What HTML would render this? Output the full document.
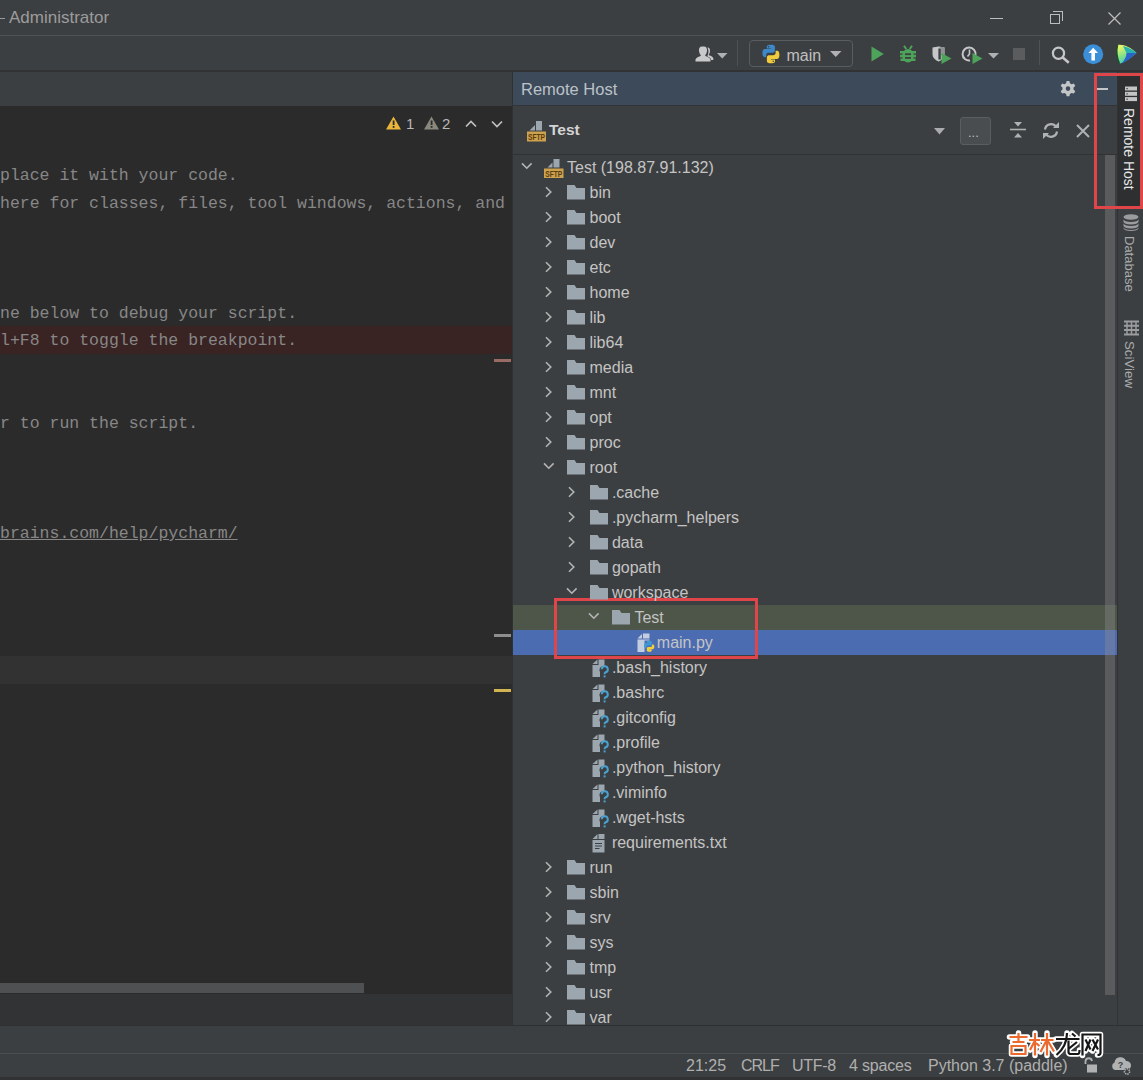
<!DOCTYPE html>
<html><head><meta charset="utf-8">
<style>
*{margin:0;padding:0;box-sizing:border-box}
html,body{width:1143px;height:1080px;overflow:hidden;background:#3c3f41;font-family:"Liberation Sans",sans-serif}
.a{position:absolute}
.code{position:absolute;left:0;font-family:"Liberation Mono",monospace;font-size:16.5px;color:#878787;white-space:pre;line-height:20px}
.tr{position:absolute;height:25px;left:513px;width:590px}
.tt{position:absolute;font-size:16px;color:#bbbbbb;white-space:pre;line-height:20px;top:2px}
svg{position:absolute;overflow:visible}
</style></head><body>
<!-- title bar -->
<div class="a" style="left:0;top:0;width:1143px;height:35px;background:#3c3f41"></div>
<div class="a" style="left:0;top:35px;width:1143px;height:1px;background:#505354"></div>
<div class="a" style="left:-2px;top:18px;width:7px;height:1px;background:#9a9a9a"></div>
<div class="a" style="left:9px;top:8px;font-size:17px;color:#9c9c9c;line-height:20px;white-space:pre">Administrator</div>
<!-- window controls -->
<div class="a" style="left:990px;top:18px;width:13px;height:1px;background:#bdbdbd"></div>
<div class="a" style="left:1050px;top:14px;width:10px;height:10px;border:1px solid #bdbdbd"></div>
<div class="a" style="left:1053px;top:11px;width:10px;height:10px;border-top:1px solid #bdbdbd;border-right:1px solid #bdbdbd"></div>
<svg style="left:1108px;top:12px" width="13" height="13"><path d="M0.5 0.5L12.5 12.5M12.5 0.5L0.5 12.5" stroke="#bdbdbd" stroke-width="1.2"/></svg>

<!-- toolbar -->
<div class="a" style="left:0;top:36px;width:1143px;height:35px;background:#3c3f41"></div>
<div class="a" style="left:0;top:70px;width:1143px;height:2px;background:#303234"></div>


<!-- toolbar icons -->
<svg style="left:695px;top:46px" width="19" height="16" viewBox="0 0 19 16"><path d="M9 0.5C11.3 0.5 12.3 2.5 12 5C11.7 7.2 10.8 8.5 10.2 9.2L10.4 10C13.2 10.8 15 12 15.5 13.5V15.5H0.5V13.5C1 12 2.8 10.8 5.6 10L5.8 9.2C5.2 8.5 4.3 7.2 4 5C3.7 2.5 4.7 0.5 7 0.5Z" fill="#c7c9cb"/><path d="M12.5 1.5C14.5 1.5 15.2 3.2 15 5.2C14.8 7 14.2 8 13.7 8.6L13.9 9.3C16.3 10 17.8 11 18.3 12.3V14H16.2C15.8 12.4 14.5 11.2 12.2 10.3C13.2 8.8 13.6 6.5 13.4 4.5C13.3 3.2 12.9 2.2 12.3 1.5Z" fill="#c7c9cb"/></svg>
<svg style="left:717px;top:53px" width="11" height="6"><path d="M0 0H10.5L5.25 5.5Z" fill="#afb1b3"/></svg>
<div class="a" style="left:737px;top:40px;width:1px;height:26px;background:#4f5254"></div>
<div class="a" style="left:749px;top:40px;width:104px;height:27px;border:1.5px solid #5a5d5f;border-radius:4px"></div>
<svg style="left:761px;top:44px" width="20" height="20" viewBox="0 0 20 20"><path d="M9.8 0.8C5.6 0.8 5.8 2.6 5.8 2.6V4.5H9.9V5.1H4.1C4.1 5.1 1.4 4.8 1.4 9.1C1.4 13.4 3.8 13.2 3.8 13.2H5.2V11.2C5.2 11.2 5.1 8.8 7.6 8.8H11.6C11.6 8.8 13.9 8.8 13.9 6.5V2.8C13.9 2.8 14.3 0.8 9.8 0.8ZM7.6 2A0.75 0.75 0 1 1 7.6 3.5A0.75 0.75 0 1 1 7.6 2Z" fill="#3d88c8"/><path d="M10 19.2C14.2 19.2 14 17.4 14 17.4V15.5H9.9V14.9H15.7C15.7 14.9 18.4 15.2 18.4 10.9C18.4 6.6 16 6.8 16 6.8H14.6V8.8C14.6 8.8 14.7 11.2 12.2 11.2H8.2C8.2 11.2 5.9 11.2 5.9 13.5V17.2C5.9 17.2 5.5 19.2 10 19.2ZM12.2 18A0.75 0.75 0 1 1 12.2 16.5A0.75 0.75 0 1 1 12.2 18Z" fill="#f0cc3c"/></svg>
<div class="a" style="left:786.5px;top:45.5px;font-size:16px;color:#c0c0c0;line-height:20px;white-space:pre;transform:scaleY(1.08);transform-origin:0 15px">main</div>
<svg style="left:830px;top:51px" width="12" height="7"><path d="M0 0H11.5L5.75 6Z" fill="#afb1b3"/></svg>
<svg style="left:871px;top:46px" width="13" height="16"><path d="M0.5 0.5L12.8 8L0.5 15.5Z" fill="#4ea35a"/></svg>
<svg style="left:899px;top:45px" width="18" height="18" viewBox="0 0 18 18"><path d="M5 0.8L7.2 4M13 0.8L10.8 4" stroke="#4ea35a" stroke-width="2"/><path d="M1 7.2H17M1 11H17M1.5 14.8H16.5" stroke="#4ea35a" stroke-width="2.4"/><ellipse cx="9" cy="10.8" rx="5.8" ry="6.8" fill="#4ea35a"/><rect x="6" y="8.3" width="6" height="1.8" fill="#3c3f41"/><rect x="6" y="12" width="6" height="1.8" fill="#3c3f41"/></svg>
<svg style="left:932px;top:46px" width="20" height="19" viewBox="0 0 20 19"><path d="M0.5 1.5L6.5 0.5L12.5 1.5V8.5C12.5 11.5 10 14 6.5 15.5C3 14 0.5 11.5 0.5 8.5Z" fill="#c4c6c8"/><path d="M6.5 0.5L12.5 1.5V8.5L9 9.5V2.5Z" fill="#8f9193"/><rect x="6.4" y="2.5" width="2.4" height="11" fill="#3c3f41"/><path d="M9.5 7L19.5 12.5L9.5 18Z" fill="#4ea35a"/></svg>
<svg style="left:962px;top:46px" width="21" height="19" viewBox="0 0 21 19"><path d="M13.5 9A6.5 6.5 0 1 0 8 14.5" stroke="#c4c6c8" stroke-width="2" fill="none"/><path d="M7.5 3.5V8L5.5 10.5" stroke="#c4c6c8" stroke-width="1.6" fill="none"/><path d="M10.5 7L20.5 12.5L10.5 18Z" fill="#4ea35a"/></svg>
<svg style="left:988px;top:53px" width="12" height="6"><path d="M0 0H11L5.5 5.5Z" fill="#afb1b3"/></svg>
<div class="a" style="left:1013px;top:48px;width:12px;height:12px;background:#5b5c5d"></div>
<div class="a" style="left:1039px;top:40px;width:1px;height:25px;background:#4f5254"></div>
<svg style="left:1051px;top:46px" width="20" height="18"><circle cx="7.5" cy="7.3" r="5.6" stroke="#c4c6c8" stroke-width="2.2" fill="none"/><path d="M11.5 11.3L17.8 16.8" stroke="#c4c6c8" stroke-width="2.6"/></svg>
<svg style="left:1083px;top:44px" width="21" height="21"><circle cx="10.2" cy="10.2" r="10" fill="#3a8fd6"/><path d="M10.2 3.8L15 9H12V16.5H8.4V9H5.4Z" fill="#ffffff"/></svg>
<svg style="left:1115px;top:41px" width="23" height="24" viewBox="0 0 23 24"><defs><linearGradient id="g1" x1="0.2" y1="0.1" x2="0.6" y2="1"><stop offset="0" stop-color="#e6f46a"/><stop offset="0.5" stop-color="#7fe08a"/><stop offset="1" stop-color="#36c8c8"/></linearGradient></defs><path d="M2.5 4C8.5 3 15.5 6 21.5 12C15.5 17.5 10 21 4.5 22.8C1.5 16 1.2 10 2.5 4Z" fill="url(#g1)"/><path d="M8 5C13.5 6.5 18 9 21.5 12H11.5Z" fill="#27b0b0"/><path d="M11.5 12H21.5C16 17 11.5 20.5 6.5 22.5C9.5 19 11.5 15.5 11.5 12Z" fill="#2b64c8"/><path d="M2.5 4C1 10 1.5 16 4.5 22.8" stroke="#1f4f2a" stroke-width="1.6" fill="none"/></svg>

<!-- editor tabs strip -->
<div class="a" style="left:0;top:72px;width:512px;height:34px;background:#3c3f41"></div>
<!-- editor -->
<div class="a" style="left:0;top:106px;width:512px;height:888px;background:#2b2b2b"></div>
<div class="a" style="left:0;top:326px;width:512px;height:28px;background:#3a2323"></div>
<div class="a" style="left:0;top:656px;width:512px;height:28px;background:#323232"></div>
<div class="a" style="left:494px;top:359px;width:17px;height:3px;background:#9a6a64"></div>
<div class="a" style="left:494px;top:634px;width:17px;height:3px;background:#8e8e8e"></div>
<div class="a" style="left:494px;top:689px;width:17px;height:3px;background:#d2b450"></div>
<div class="code" style="top:166px">place it with your code.</div>
<div class="code" style="top:194px">here for classes, files, tool windows, actions, and</div>
<div class="code" style="top:304px">ne below to debug your script.</div>
<div class="code" style="top:331px">l+F8 to toggle the breakpoint.</div>
<div class="code" style="top:414px">r to run the script.</div>
<div class="code" style="top:524px;text-decoration:underline">brains.com/help/pycharm/</div>
<!-- editor h scrollbar -->
<div class="a" style="left:0;top:983px;width:364px;height:10px;background:#4e5051"></div>
<!-- breadcrumbs band -->
<div class="a" style="left:0;top:994px;width:512px;height:31px;background:#313335"></div>
<div class="a" style="left:0;top:1053px;width:1143px;height:1px;background:#4b4e50"></div>

<!-- tool window -->
<div class="a" style="left:512px;top:72px;width:1px;height:953px;background:#2f3133"></div>
<div class="a" style="left:513px;top:72px;width:604px;height:33px;background:#3c4a5a"></div>
<div class="a" style="left:513px;top:105px;width:604px;height:1px;background:#323437"></div>
<div class="a" style="left:513px;top:106px;width:604px;height:48px;background:#3c3f41"></div>
<div class="a" style="left:513px;top:154px;width:604px;height:1px;background:#323232"></div>
<div class="a" style="left:513px;top:155px;width:604px;height:870px;background:#3c3f41"></div>
<div class="a" style="left:521px;top:79px;font-size:16.5px;color:#bdc2c8;line-height:20px;white-space:pre">Remote Host</div>

<!-- tree rows bg -->
<div class="a" style="left:513px;top:605px;width:604px;height:25px;background:#4e5549"></div>
<div class="a" style="left:513px;top:630px;width:604px;height:25px;background:#4c6cb2"></div>
<!-- scrollbar -->
<div class="a" style="left:1105px;top:155px;width:10px;height:840px;background:rgba(150,150,150,0.33)"></div>

<!-- right stripe -->
<div class="a" style="left:1117px;top:72px;width:26px;height:953px;background:#3c3f41"></div>
<div class="a" style="left:1117px;top:72px;width:1px;height:953px;background:#323232"></div>
<div class="a" style="left:1118px;top:76px;width:22px;height:130px;background:#2d2f31"></div>

<!-- bottom bands -->
<div class="a" style="left:0;top:1025px;width:1143px;height:28px;background:#3c3f41"></div>
<div class="a" style="left:0;top:1054px;width:1143px;height:26px;background:#3c3f41"></div>
<div class="a" style="left:0;top:1025px;width:1143px;height:1px;background:#2e3032"></div>
<div class="a" style="left:0;top:1077px;width:1143px;height:3px;background:#303234"></div>


<!-- header icons -->
<svg style="left:1059px;top:80px" width="18" height="18" viewBox="0 0 18 18"><path fill="#c3c5c7" fill-rule="evenodd" d="M7.6 1H10.4L10.9 3.3L12.6 4.3L14.9 3.6L16.3 6L14.5 7.6V9.6L16.3 11.2L14.9 13.6L12.6 12.9L10.9 13.9L10.4 16.2H7.6L7.1 13.9L5.4 12.9L3.1 13.6L1.7 11.2L3.5 9.6V7.6L1.7 6L3.1 3.6L5.4 4.3L7.1 3.3ZM9 6.3A2.3 2.3 0 1 0 9 10.9A2.3 2.3 0 1 0 9 6.3Z"/></svg>
<div class="a" style="left:1094px;top:88px;width:14px;height:2px;background:#c3c5c7"></div>

<!-- combo row -->
<svg style="left:527px;top:120px" width="22" height="23"><path d="M2.5 10.5L8 5V10.5Z" fill="#9ba6af"/><path d="M9 1H15V10.5H9Z" fill="#9ba6af"/><rect x="0" y="11.5" width="19" height="10" fill="#cda24e"/><text x="9.5" y="20" font-family="Liberation Sans" font-size="8.5" font-weight="700" fill="#5a3a10" text-anchor="middle" textLength="17" lengthAdjust="spacingAndGlyphs">SFTP</text></svg>
<div class="a" style="left:549px;top:120px;font-size:15.5px;font-weight:700;color:#d4d4d4;line-height:20px;white-space:pre">Test</div>
<svg style="left:934px;top:128px" width="12" height="7"><path d="M0 0H11L5.5 6.5Z" fill="#a9abad"/></svg>
<div class="a" style="left:960px;top:117px;width:31px;height:28px;background:#4a4d4f;border:1px solid #5b5e60;border-radius:3px"></div>
<div class="a" style="left:968px;top:123px;font-size:13px;color:#bbbbbb;line-height:20px;letter-spacing:0px">...</div>
<svg style="left:1010px;top:121px" width="16" height="18"><path d="M0 8.5H16" stroke="#afb1b3" stroke-width="1.6"/><path d="M4 1H12L8 5.5Z M4 16.5H12L8 12Z" fill="#afb1b3"/></svg>
<svg style="left:1042px;top:122px" width="18" height="17" viewBox="0 0 18 17"><path d="M3 7.5A6 6 0 0 1 14 5" stroke="#afb1b3" stroke-width="2.2" fill="none"/><path d="M15 9.5A6 6 0 0 1 4 12" stroke="#afb1b3" stroke-width="2.2" fill="none"/><path d="M11 6H17V0Z" fill="#afb1b3"/><path d="M7 11H1V17Z" fill="#afb1b3"/></svg>
<svg style="left:1076px;top:124px" width="14" height="14"><path d="M1 1L13 13M13 1L1 13" stroke="#afb1b3" stroke-width="2"/></svg>

<!-- editor top warnings -->
<svg style="left:386px;top:116px" width="16" height="14"><path d="M7.5 0.5L15 13.5H0Z" fill="#e8b63a"/><rect x="6.7" y="4.5" width="1.8" height="4.5" fill="#2b2b2b"/><rect x="6.7" y="10" width="1.8" height="1.8" fill="#2b2b2b"/></svg>
<div class="a" style="left:406px;top:114px;font-size:15px;color:#b8b8b8;line-height:20px">1</div>
<svg style="left:424px;top:116px" width="16" height="14"><path d="M7.5 0.5L15 13.5H0Z" fill="#8a887c"/><rect x="6.7" y="4.5" width="1.8" height="4.5" fill="#2b2b2b"/><rect x="6.7" y="10" width="1.8" height="1.8" fill="#2b2b2b"/></svg>
<div class="a" style="left:442px;top:114px;font-size:15px;color:#b8b8b8;line-height:20px">2</div>
<svg style="left:465px;top:120px" width="12" height="8"><path d="M1 6.5L6 1.5L11 6.5" stroke="#c0c0c0" stroke-width="1.7" fill="none"/></svg>
<svg style="left:491px;top:120px" width="12" height="8"><path d="M1 1.5L6 6.5L11 1.5" stroke="#c0c0c0" stroke-width="1.7" fill="none"/></svg>

<!-- right stripe labels -->
<svg style="left:1125px;top:86px" width="13" height="16"><rect x="0" y="0.5" width="12" height="4" fill="#c4c4c4"/><rect x="0" y="5.8" width="12" height="4" fill="#c4c4c4"/><rect x="0" y="11.1" width="12" height="4" fill="#c4c4c4"/><rect x="1.5" y="2" width="1.2" height="1.2" fill="#2d2f31"/><rect x="1.5" y="7.3" width="1.2" height="1.2" fill="#2d2f31"/><rect x="1.5" y="12.6" width="1.2" height="1.2" fill="#2d2f31"/></svg>
<div class="a" style="left:1119px;top:108px;width:82px;height:20px;transform-origin:0 0;transform:translate(20px,0) rotate(90deg);font-size:14px;color:#e6e6e6;line-height:20px;white-space:pre">Remote Host</div>
<svg style="left:1123px;top:214px" width="16" height="17"><ellipse cx="8" cy="3" rx="7.5" ry="2.8" fill="#9a9c9e"/><path d="M0.5 5.2A7.5 2.8 0 0 0 15.5 5.2V7.7A7.5 2.8 0 0 1 0.5 7.7Z M0.5 9.2A7.5 2.8 0 0 0 15.5 9.2V11.7A7.5 2.8 0 0 1 0.5 11.7Z M0.5 13.2A7.5 2.8 0 0 0 15.5 13.2V14.2A7.5 2.8 0 0 1 0.5 14.2Z" fill="#9a9c9e"/></svg>
<div class="a" style="left:1119px;top:236px;width:60px;height:20px;transform-origin:0 0;transform:translate(20px,0) rotate(90deg);font-size:13px;color:#a9abad;line-height:20px;white-space:pre">Database</div>
<svg style="left:1124px;top:321px" width="15" height="14"><path d="M0 0.5H15M0 4.8H15M0 9.1H15M0 13.4H15" stroke="#9a9c9e" stroke-width="2"/><path d="M3 0V14M7.5 0V14M12 0V14" stroke="#9a9c9e" stroke-width="1.5"/></svg>
<div class="a" style="left:1119px;top:341px;width:60px;height:20px;transform-origin:0 0;transform:translate(20px,0) rotate(90deg);font-size:13.3px;color:#a9abad;line-height:20px;white-space:pre">SciView</div>

<!-- red rectangles -->
<div class="a" style="left:1094px;top:73px;width:49px;height:136px;border:3.5px solid #e0454a;border-right-width:3px"></div>
<div class="a" style="left:554px;top:598px;width:204px;height:61px;border:3px solid #e0454a"></div>

<!-- status bar -->
<div class="a" style="left:686px;top:1056px;font-size:16px;color:#afafaf;line-height:20px;white-space:pre">21:25</div>
<div class="a" style="left:741px;top:1056px;font-size:16px;color:#afafaf;line-height:20px;white-space:pre;letter-spacing:-1px">CRLF</div>
<div class="a" style="left:792px;top:1056px;font-size:16px;color:#afafaf;line-height:20px;white-space:pre;letter-spacing:-0.3px">UTF-8</div>
<div class="a" style="left:849px;top:1056px;font-size:16px;color:#afafaf;line-height:20px;white-space:pre;letter-spacing:-0.2px">4 spaces</div>
<div class="a" style="left:928px;top:1056px;font-size:16px;color:#afafaf;line-height:20px;white-space:pre">Python 3.7 (paddle)</div>
<svg style="left:1084px;top:1057px" width="14" height="16"><path d="M1.5 7V4A3.3 3.3 0 0 1 8 4" stroke="#afb1b3" stroke-width="1.8" fill="none"/><rect x="3" y="7.5" width="10" height="8" fill="#afb1b3"/></svg>
<svg style="left:1111px;top:1056px" width="22" height="20"><path d="M4 14A4 4 0 0 1 3.5 6.5A6 6 0 0 1 15 5A4.5 4.5 0 0 1 16 14Z" fill="#afb1b3"/><text x="9.5" y="12" font-family="Liberation Sans" font-size="9" font-weight="700" fill="#3c3f41" text-anchor="middle">?</text><circle cx="16" cy="15.5" r="3.5" fill="#3c3f41"/><circle cx="16" cy="15.5" r="2.6" fill="none" stroke="#afb1b3" stroke-width="1.6" stroke-dasharray="1.4 0.9"/></svg>

<svg style="left:520.8px;top:155px" width="14" height="25"><path d="M1 8.4L5.8 13.2L10.6 8.4" stroke="#b4b4b4" stroke-width="1.6" fill="none"/></svg>
<svg style="left:543.8px;top:155px" width="22" height="25"><path d="M3.5 12.5L8.5 7.5V12.5Z" fill="#9ba6af"/><path d="M9.5 4H15.5V12.5H9.5Z" fill="#9ba6af"/><rect x="0" y="13.5" width="19.5" height="9.5" fill="#cda24e"/><text x="9.75" y="21.8" font-family="Liberation Sans" font-size="8.5" font-weight="700" fill="#5a3a10" text-anchor="middle" textLength="17" lengthAdjust="spacingAndGlyphs">SFTP</text></svg>
<div class="tt" style="left:567.0px;top:158.0px;color:#c4c4c4">Test (198.87.91.132)</div>
<svg style="left:545.2px;top:180px" width="10" height="25"><path d="M1 7.2L5.8 12L1 16.8" stroke="#b4b4b4" stroke-width="1.6" fill="none"/></svg>
<svg style="left:567.2px;top:180px" width="20" height="25"><path d="M0 5H7.5L9.5 8H18V19.5H0Z" fill="#9ba6af"/></svg>
<div class="tt" style="left:589.5px;top:183.0px;color:#c4c4c4">bin</div>
<svg style="left:545.2px;top:205px" width="10" height="25"><path d="M1 7.2L5.8 12L1 16.8" stroke="#b4b4b4" stroke-width="1.6" fill="none"/></svg>
<svg style="left:567.2px;top:205px" width="20" height="25"><path d="M0 5H7.5L9.5 8H18V19.5H0Z" fill="#9ba6af"/></svg>
<div class="tt" style="left:589.5px;top:208.0px;color:#c4c4c4">boot</div>
<svg style="left:545.2px;top:230px" width="10" height="25"><path d="M1 7.2L5.8 12L1 16.8" stroke="#b4b4b4" stroke-width="1.6" fill="none"/></svg>
<svg style="left:567.2px;top:230px" width="20" height="25"><path d="M0 5H7.5L9.5 8H18V19.5H0Z" fill="#9ba6af"/></svg>
<div class="tt" style="left:589.5px;top:233.0px;color:#c4c4c4">dev</div>
<svg style="left:545.2px;top:255px" width="10" height="25"><path d="M1 7.2L5.8 12L1 16.8" stroke="#b4b4b4" stroke-width="1.6" fill="none"/></svg>
<svg style="left:567.2px;top:255px" width="20" height="25"><path d="M0 5H7.5L9.5 8H18V19.5H0Z" fill="#9ba6af"/></svg>
<div class="tt" style="left:589.5px;top:258.0px;color:#c4c4c4">etc</div>
<svg style="left:545.2px;top:280px" width="10" height="25"><path d="M1 7.2L5.8 12L1 16.8" stroke="#b4b4b4" stroke-width="1.6" fill="none"/></svg>
<svg style="left:567.2px;top:280px" width="20" height="25"><path d="M0 5H7.5L9.5 8H18V19.5H0Z" fill="#9ba6af"/></svg>
<div class="tt" style="left:589.5px;top:283.0px;color:#c4c4c4">home</div>
<svg style="left:545.2px;top:305px" width="10" height="25"><path d="M1 7.2L5.8 12L1 16.8" stroke="#b4b4b4" stroke-width="1.6" fill="none"/></svg>
<svg style="left:567.2px;top:305px" width="20" height="25"><path d="M0 5H7.5L9.5 8H18V19.5H0Z" fill="#9ba6af"/></svg>
<div class="tt" style="left:589.5px;top:308.0px;color:#c4c4c4">lib</div>
<svg style="left:545.2px;top:330px" width="10" height="25"><path d="M1 7.2L5.8 12L1 16.8" stroke="#b4b4b4" stroke-width="1.6" fill="none"/></svg>
<svg style="left:567.2px;top:330px" width="20" height="25"><path d="M0 5H7.5L9.5 8H18V19.5H0Z" fill="#9ba6af"/></svg>
<div class="tt" style="left:589.5px;top:333.0px;color:#c4c4c4">lib64</div>
<svg style="left:545.2px;top:355px" width="10" height="25"><path d="M1 7.2L5.8 12L1 16.8" stroke="#b4b4b4" stroke-width="1.6" fill="none"/></svg>
<svg style="left:567.2px;top:355px" width="20" height="25"><path d="M0 5H7.5L9.5 8H18V19.5H0Z" fill="#9ba6af"/></svg>
<div class="tt" style="left:589.5px;top:358.0px;color:#c4c4c4">media</div>
<svg style="left:545.2px;top:380px" width="10" height="25"><path d="M1 7.2L5.8 12L1 16.8" stroke="#b4b4b4" stroke-width="1.6" fill="none"/></svg>
<svg style="left:567.2px;top:380px" width="20" height="25"><path d="M0 5H7.5L9.5 8H18V19.5H0Z" fill="#9ba6af"/></svg>
<div class="tt" style="left:589.5px;top:383.0px;color:#c4c4c4">mnt</div>
<svg style="left:545.2px;top:405px" width="10" height="25"><path d="M1 7.2L5.8 12L1 16.8" stroke="#b4b4b4" stroke-width="1.6" fill="none"/></svg>
<svg style="left:567.2px;top:405px" width="20" height="25"><path d="M0 5H7.5L9.5 8H18V19.5H0Z" fill="#9ba6af"/></svg>
<div class="tt" style="left:589.5px;top:408.0px;color:#c4c4c4">opt</div>
<svg style="left:545.2px;top:430px" width="10" height="25"><path d="M1 7.2L5.8 12L1 16.8" stroke="#b4b4b4" stroke-width="1.6" fill="none"/></svg>
<svg style="left:567.2px;top:430px" width="20" height="25"><path d="M0 5H7.5L9.5 8H18V19.5H0Z" fill="#9ba6af"/></svg>
<div class="tt" style="left:589.5px;top:433.0px;color:#c4c4c4">proc</div>
<svg style="left:543.2px;top:455px" width="14" height="25"><path d="M1 8.4L5.8 13.2L10.6 8.4" stroke="#b4b4b4" stroke-width="1.6" fill="none"/></svg>
<svg style="left:567.2px;top:455px" width="20" height="25"><path d="M0 5H7.5L9.5 8H18V19.5H0Z" fill="#9ba6af"/></svg>
<div class="tt" style="left:589.5px;top:458.0px;color:#c4c4c4">root</div>
<svg style="left:567.7px;top:480px" width="10" height="25"><path d="M1 7.2L5.8 12L1 16.8" stroke="#b4b4b4" stroke-width="1.6" fill="none"/></svg>
<svg style="left:589.7px;top:480px" width="20" height="25"><path d="M0 5H7.5L9.5 8H18V19.5H0Z" fill="#9ba6af"/></svg>
<div class="tt" style="left:611.9px;top:483.0px;color:#c4c4c4">.cache</div>
<svg style="left:567.7px;top:505px" width="10" height="25"><path d="M1 7.2L5.8 12L1 16.8" stroke="#b4b4b4" stroke-width="1.6" fill="none"/></svg>
<svg style="left:589.7px;top:505px" width="20" height="25"><path d="M0 5H7.5L9.5 8H18V19.5H0Z" fill="#9ba6af"/></svg>
<div class="tt" style="left:611.9px;top:508.0px;color:#c4c4c4">.pycharm_helpers</div>
<svg style="left:567.7px;top:530px" width="10" height="25"><path d="M1 7.2L5.8 12L1 16.8" stroke="#b4b4b4" stroke-width="1.6" fill="none"/></svg>
<svg style="left:589.7px;top:530px" width="20" height="25"><path d="M0 5H7.5L9.5 8H18V19.5H0Z" fill="#9ba6af"/></svg>
<div class="tt" style="left:611.9px;top:533.0px;color:#c4c4c4">data</div>
<svg style="left:567.7px;top:555px" width="10" height="25"><path d="M1 7.2L5.8 12L1 16.8" stroke="#b4b4b4" stroke-width="1.6" fill="none"/></svg>
<svg style="left:589.7px;top:555px" width="20" height="25"><path d="M0 5H7.5L9.5 8H18V19.5H0Z" fill="#9ba6af"/></svg>
<div class="tt" style="left:611.9px;top:558.0px;color:#c4c4c4">gopath</div>
<svg style="left:565.7px;top:580px" width="14" height="25"><path d="M1 8.4L5.8 13.2L10.6 8.4" stroke="#b4b4b4" stroke-width="1.6" fill="none"/></svg>
<svg style="left:589.7px;top:580px" width="20" height="25"><path d="M0 5H7.5L9.5 8H18V19.5H0Z" fill="#9ba6af"/></svg>
<div class="tt" style="left:611.9px;top:583.0px;color:#c4c4c4">workspace</div>
<svg style="left:588.1px;top:605px" width="14" height="25"><path d="M1 8.4L5.8 13.2L10.6 8.4" stroke="#b4b4b4" stroke-width="1.6" fill="none"/></svg>
<svg style="left:612.1px;top:605px" width="20" height="25"><path d="M0 5H7.5L9.5 8H18V19.5H0Z" fill="#9ba6af"/></svg>
<div class="tt" style="left:634.4px;top:608.0px;color:#c4c4c4">Test</div>
<svg style="left:636.6px;top:630px" width="20" height="25"><path d="M0.5 8.5L5 4V8.5Z" fill="#c3cde0"/><path d="M6 3.5H12.5V8.5H6Z" fill="#c3cde0"/><path d="M0.5 9.5H12.5V10.5H7.5V22H0.5Z" fill="#c3cde0"/><g transform="translate(6.3,10.3) scale(0.6)"><path d="M9.8 0.8C5.6 0.8 5.8 2.6 5.8 2.6V4.5H9.9V5.1H4.1C4.1 5.1 1.4 4.8 1.4 9.1C1.4 13.4 3.8 13.2 3.8 13.2H5.2V11.2C5.2 11.2 5.1 8.8 7.6 8.8H11.6C11.6 8.8 13.9 8.8 13.9 6.5V2.8C13.9 2.8 14.3 0.8 9.8 0.8Z" fill="#3d9ad4"/><path d="M10 19.2C14.2 19.2 14 17.4 14 17.4V15.5H9.9V14.9H15.7C15.7 14.9 18.4 15.2 18.4 10.9C18.4 6.6 16 6.8 16 6.8H14.6V8.8C14.6 8.8 14.7 11.2 12.2 11.2H8.2C8.2 11.2 5.9 11.2 5.9 13.5V17.2C5.9 17.2 5.5 19.2 10 19.2Z" fill="#f2d03c"/></g></svg>
<div class="tt" style="left:656.8px;top:633.0px;color:#c4c4c4">main.py</div>
<svg style="left:591.7px;top:655px" width="20" height="25"><path d="M0 9V4.5L5 4.5V9Z" fill="#9ba6af" opacity="0"/><path d="M0.5 9L5.5 4.5V9Z" fill="#9ba6af"/><path d="M6.5 4.5H12.5V11H6.5Z" fill="#9ba6af"/><path d="M0.5 10H12.5V11.5H9.5A4 4 0 0 0 8 17V22H0.5Z" fill="#9ba6af"/><path d="M9.8 14.2A3 3 0 1 1 13.6 17.2Q12.6 17.8 12.6 19.2" stroke="#4aa0cf" stroke-width="2" fill="none"/><rect x="11.6" y="20.4" width="2" height="2" fill="#4aa0cf"/></svg>
<div class="tt" style="left:611.9px;top:658.0px;color:#c4c4c4">.bash_history</div>
<svg style="left:591.7px;top:680px" width="20" height="25"><path d="M0 9V4.5L5 4.5V9Z" fill="#9ba6af" opacity="0"/><path d="M0.5 9L5.5 4.5V9Z" fill="#9ba6af"/><path d="M6.5 4.5H12.5V11H6.5Z" fill="#9ba6af"/><path d="M0.5 10H12.5V11.5H9.5A4 4 0 0 0 8 17V22H0.5Z" fill="#9ba6af"/><path d="M9.8 14.2A3 3 0 1 1 13.6 17.2Q12.6 17.8 12.6 19.2" stroke="#4aa0cf" stroke-width="2" fill="none"/><rect x="11.6" y="20.4" width="2" height="2" fill="#4aa0cf"/></svg>
<div class="tt" style="left:611.9px;top:683.0px;color:#c4c4c4">.bashrc</div>
<svg style="left:591.7px;top:705px" width="20" height="25"><path d="M0 9V4.5L5 4.5V9Z" fill="#9ba6af" opacity="0"/><path d="M0.5 9L5.5 4.5V9Z" fill="#9ba6af"/><path d="M6.5 4.5H12.5V11H6.5Z" fill="#9ba6af"/><path d="M0.5 10H12.5V11.5H9.5A4 4 0 0 0 8 17V22H0.5Z" fill="#9ba6af"/><path d="M9.8 14.2A3 3 0 1 1 13.6 17.2Q12.6 17.8 12.6 19.2" stroke="#4aa0cf" stroke-width="2" fill="none"/><rect x="11.6" y="20.4" width="2" height="2" fill="#4aa0cf"/></svg>
<div class="tt" style="left:611.9px;top:708.0px;color:#c4c4c4">.gitconfig</div>
<svg style="left:591.7px;top:730px" width="20" height="25"><path d="M0 9V4.5L5 4.5V9Z" fill="#9ba6af" opacity="0"/><path d="M0.5 9L5.5 4.5V9Z" fill="#9ba6af"/><path d="M6.5 4.5H12.5V11H6.5Z" fill="#9ba6af"/><path d="M0.5 10H12.5V11.5H9.5A4 4 0 0 0 8 17V22H0.5Z" fill="#9ba6af"/><path d="M9.8 14.2A3 3 0 1 1 13.6 17.2Q12.6 17.8 12.6 19.2" stroke="#4aa0cf" stroke-width="2" fill="none"/><rect x="11.6" y="20.4" width="2" height="2" fill="#4aa0cf"/></svg>
<div class="tt" style="left:611.9px;top:733.0px;color:#c4c4c4">.profile</div>
<svg style="left:591.7px;top:755px" width="20" height="25"><path d="M0 9V4.5L5 4.5V9Z" fill="#9ba6af" opacity="0"/><path d="M0.5 9L5.5 4.5V9Z" fill="#9ba6af"/><path d="M6.5 4.5H12.5V11H6.5Z" fill="#9ba6af"/><path d="M0.5 10H12.5V11.5H9.5A4 4 0 0 0 8 17V22H0.5Z" fill="#9ba6af"/><path d="M9.8 14.2A3 3 0 1 1 13.6 17.2Q12.6 17.8 12.6 19.2" stroke="#4aa0cf" stroke-width="2" fill="none"/><rect x="11.6" y="20.4" width="2" height="2" fill="#4aa0cf"/></svg>
<div class="tt" style="left:611.9px;top:758.0px;color:#c4c4c4">.python_history</div>
<svg style="left:591.7px;top:780px" width="20" height="25"><path d="M0 9V4.5L5 4.5V9Z" fill="#9ba6af" opacity="0"/><path d="M0.5 9L5.5 4.5V9Z" fill="#9ba6af"/><path d="M6.5 4.5H12.5V11H6.5Z" fill="#9ba6af"/><path d="M0.5 10H12.5V11.5H9.5A4 4 0 0 0 8 17V22H0.5Z" fill="#9ba6af"/><path d="M9.8 14.2A3 3 0 1 1 13.6 17.2Q12.6 17.8 12.6 19.2" stroke="#4aa0cf" stroke-width="2" fill="none"/><rect x="11.6" y="20.4" width="2" height="2" fill="#4aa0cf"/></svg>
<div class="tt" style="left:611.9px;top:783.0px;color:#c4c4c4">.viminfo</div>
<svg style="left:591.7px;top:805px" width="20" height="25"><path d="M0 9V4.5L5 4.5V9Z" fill="#9ba6af" opacity="0"/><path d="M0.5 9L5.5 4.5V9Z" fill="#9ba6af"/><path d="M6.5 4.5H12.5V11H6.5Z" fill="#9ba6af"/><path d="M0.5 10H12.5V11.5H9.5A4 4 0 0 0 8 17V22H0.5Z" fill="#9ba6af"/><path d="M9.8 14.2A3 3 0 1 1 13.6 17.2Q12.6 17.8 12.6 19.2" stroke="#4aa0cf" stroke-width="2" fill="none"/><rect x="11.6" y="20.4" width="2" height="2" fill="#4aa0cf"/></svg>
<div class="tt" style="left:611.9px;top:808.0px;color:#c4c4c4">.wget-hsts</div>
<svg style="left:591.7px;top:830px" width="20" height="25"><path d="M0.5 9L5.5 4V9Z" fill="#9ba6af"/><path d="M6.5 4H12.5V9H6.5Z" fill="#9ba6af"/><path d="M0.5 10H12.5V22.5H0.5Z" fill="#9ba6af"/><path d="M3 13.5H10M3 16H10M3 18.5H7.5" stroke="#3c3f41" stroke-width="1"/></svg>
<div class="tt" style="left:611.9px;top:833.0px;color:#c4c4c4">requirements.txt</div>
<svg style="left:545.2px;top:855px" width="10" height="25"><path d="M1 7.2L5.8 12L1 16.8" stroke="#b4b4b4" stroke-width="1.6" fill="none"/></svg>
<svg style="left:567.2px;top:855px" width="20" height="25"><path d="M0 5H7.5L9.5 8H18V19.5H0Z" fill="#9ba6af"/></svg>
<div class="tt" style="left:589.5px;top:858.0px;color:#c4c4c4">run</div>
<svg style="left:545.2px;top:880px" width="10" height="25"><path d="M1 7.2L5.8 12L1 16.8" stroke="#b4b4b4" stroke-width="1.6" fill="none"/></svg>
<svg style="left:567.2px;top:880px" width="20" height="25"><path d="M0 5H7.5L9.5 8H18V19.5H0Z" fill="#9ba6af"/></svg>
<div class="tt" style="left:589.5px;top:883.0px;color:#c4c4c4">sbin</div>
<svg style="left:545.2px;top:905px" width="10" height="25"><path d="M1 7.2L5.8 12L1 16.8" stroke="#b4b4b4" stroke-width="1.6" fill="none"/></svg>
<svg style="left:567.2px;top:905px" width="20" height="25"><path d="M0 5H7.5L9.5 8H18V19.5H0Z" fill="#9ba6af"/></svg>
<div class="tt" style="left:589.5px;top:908.0px;color:#c4c4c4">srv</div>
<svg style="left:545.2px;top:930px" width="10" height="25"><path d="M1 7.2L5.8 12L1 16.8" stroke="#b4b4b4" stroke-width="1.6" fill="none"/></svg>
<svg style="left:567.2px;top:930px" width="20" height="25"><path d="M0 5H7.5L9.5 8H18V19.5H0Z" fill="#9ba6af"/></svg>
<div class="tt" style="left:589.5px;top:933.0px;color:#c4c4c4">sys</div>
<svg style="left:545.2px;top:955px" width="10" height="25"><path d="M1 7.2L5.8 12L1 16.8" stroke="#b4b4b4" stroke-width="1.6" fill="none"/></svg>
<svg style="left:567.2px;top:955px" width="20" height="25"><path d="M0 5H7.5L9.5 8H18V19.5H0Z" fill="#9ba6af"/></svg>
<div class="tt" style="left:589.5px;top:958.0px;color:#c4c4c4">tmp</div>
<svg style="left:545.2px;top:980px" width="10" height="25"><path d="M1 7.2L5.8 12L1 16.8" stroke="#b4b4b4" stroke-width="1.6" fill="none"/></svg>
<svg style="left:567.2px;top:980px" width="20" height="25"><path d="M0 5H7.5L9.5 8H18V19.5H0Z" fill="#9ba6af"/></svg>
<div class="tt" style="left:589.5px;top:983.0px;color:#c4c4c4">usr</div>
<svg style="left:545.2px;top:1005px" width="10" height="25"><path d="M1 7.2L5.8 12L1 16.8" stroke="#b4b4b4" stroke-width="1.6" fill="none"/></svg>
<svg style="left:567.2px;top:1005px" width="20" height="25"><path d="M0 5H7.5L9.5 8H18V19.5H0Z" fill="#9ba6af"/></svg>
<div class="tt" style="left:589.5px;top:1008.0px;color:#c4c4c4">var</div>
<!-- watermark -->
<svg style="left:1000px;top:1028px" width="110" height="34"><g transform="translate(8.5,4.5)"><path d="M1 4.5H19M10 0.5V9.5M4 9.5H16M3 13.5H17V21.5H3Z" stroke="#ffffff" stroke-width="5.5" fill="none" stroke-linejoin="round" stroke-linecap="round"/></g><g transform="translate(29,4.5)"><path d="M0 7.5H11M6 0.5V23M6 8L1 17.5M7 10.5L10.5 13.5M12 7.5H24.5M18 0.5V23M17.5 8L11.5 19.5M18.5 8L25 19" stroke="#ffffff" stroke-width="5.5" fill="none" stroke-linejoin="round" stroke-linecap="round"/></g><g transform="translate(56,4.5)"><path d="M0 6.5H23.5M11 0.5C11 9 7 17 0.5 22.5M12.5 8V19.5Q12.5 21.5 15 21.5H22Q23.5 21.5 23.5 17.5M21 9.5L13 16M16 1L19.5 4" stroke="#ffffff" stroke-width="5.5" fill="none" stroke-linejoin="round" stroke-linecap="round"/></g><g transform="translate(81,4.5)"><path d="M1.5 23V2H19.5V20.5Q19.5 22.5 16.5 22.5M4.5 7L9.5 17M9.5 7L4.5 18.5M11.5 7L17 17M17 7L11.5 18.5" stroke="#ffffff" stroke-width="5.5" fill="none" stroke-linejoin="round" stroke-linecap="round"/></g><g transform="translate(8.5,4.5)"><path d="M1 4.5H19M10 0.5V9.5M4 9.5H16M3 13.5H17V21.5H3Z" stroke="#ec6a2e" stroke-width="2.2" fill="none"/></g><g transform="translate(29,4.5)"><path d="M0 7.5H11M6 0.5V23M6 8L1 17.5M7 10.5L10.5 13.5M12 7.5H24.5M18 0.5V23M17.5 8L11.5 19.5M18.5 8L25 19" stroke="#ec6a2e" stroke-width="2.2" fill="none"/></g><g transform="translate(56,4.5)"><path d="M0 6.5H23.5M11 0.5C11 9 7 17 0.5 22.5M12.5 8V19.5Q12.5 21.5 15 21.5H22Q23.5 21.5 23.5 17.5M21 9.5L13 16M16 1L19.5 4" stroke="#161616" stroke-width="2.2" fill="none"/></g><g transform="translate(81,4.5)"><path d="M1.5 23V2H19.5V20.5Q19.5 22.5 16.5 22.5M4.5 7L9.5 17M9.5 7L4.5 18.5M11.5 7L17 17M17 7L11.5 18.5" stroke="#161616" stroke-width="2.2" fill="none"/></g></svg>
</body></html>
